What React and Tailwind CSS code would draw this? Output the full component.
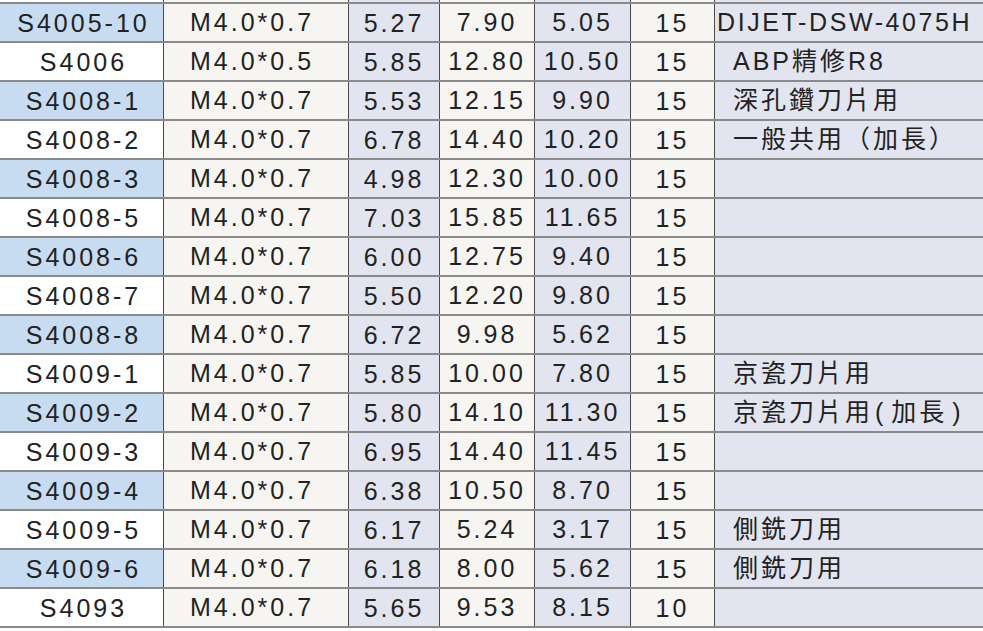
import React from "react";

const rows = [
  ["S4005-10", "M4.0*0.7", "5.27", "7.90", "5.05", "15", "DIJET-DSW-4075H"],
  ["S4006", "M4.0*0.5", "5.85", "12.80", "10.50", "15", "ABP精修R8"],
  ["S4008-1", "M4.0*0.7", "5.53", "12.15", "9.90", "15", "深孔鑽刀片用"],
  ["S4008-2", "M4.0*0.7", "6.78", "14.40", "10.20", "15", "一般共用（加長）"],
  ["S4008-3", "M4.0*0.7", "4.98", "12.30", "10.00", "15", ""],
  ["S4008-5", "M4.0*0.7", "7.03", "15.85", "11.65", "15", ""],
  ["S4008-6", "M4.0*0.7", "6.00", "12.75", "9.40", "15", ""],
  ["S4008-7", "M4.0*0.7", "5.50", "12.20", "9.80", "15", ""],
  ["S4008-8", "M4.0*0.7", "6.72", "9.98", "5.62", "15", ""],
  ["S4009-1", "M4.0*0.7", "5.85", "10.00", "7.80", "15", "京瓷刀片用"],
  ["S4009-2", "M4.0*0.7", "5.80", "14.10", "11.30", "15", "paren"],
  ["S4009-3", "M4.0*0.7", "6.95", "14.40", "11.45", "15", ""],
  ["S4009-4", "M4.0*0.7", "6.38", "10.50", "8.70", "15", ""],
  ["S4009-5", "M4.0*0.7", "6.17", "5.24", "3.17", "15", "側銑刀用"],
  ["S4009-6", "M4.0*0.7", "6.18", "8.00", "5.62", "15", "側銑刀用"],
  ["S4093", "M4.0*0.7", "5.65", "9.53", "8.15", "10", ""],
];

const grid = "grid grid-cols-[163px_185px_91px_95px_96px_84px_1fr]";
const cell = "flex items-center justify-center border-l border-[#4a4a4a]";

const Note = ({ text, first }) => {
  if (text === "paren") {
    return (
      <span>
        京瓷刀片用<span className="ml-[2px] mr-[5px]">(</span>加長<span className="ml-[5px]">)</span>
      </span>
    );
  }
  if (first) return <span className="-ml-[16px] tracking-[2.6px]">{text}</span>;
  return <span>{text}</span>;
};

export default function App() {
  return (
    <div
      className="w-[983px] h-[631px] bg-white text-[#222] overflow-hidden"
      style={{ fontFamily: '"Liberation Sans", Arial, "Noto Sans CJK TC", sans-serif' }}
    >
      {/* partial row above */}
      <div className={`${grid} h-[2px] border-b-2 border-[#8a8a8a] box-content`}>
        <div className="bg-white" />
        <div className="bg-[#f6f5f1] border-l border-[#4a4a4a]" />
        <div className="bg-[#e2e5ef] border-l border-[#4a4a4a]" />
        <div className="bg-[#f6f5f1] border-l border-[#4a4a4a]" />
        <div className="bg-[#e2e5ef] border-l border-[#4a4a4a]" />
        <div className="bg-[#f6f5f1] border-l border-[#4a4a4a]" />
        <div className="bg-[#e2e5ef] border-l border-[#4a4a4a]" />
      </div>

      {rows.map((r, i) => (
        <div
          key={r[0]}
          className={`${grid} h-[39px] border-b-2 border-[#8a8a8a] text-[25px] tracking-[3px] leading-none`}
        >
          <div className={`flex items-center justify-center pt-[1px] pl-[4px] ${i % 2 === 0 ? "bg-[#c7dcf1]" : "bg-white"}`}>
            {r[0]}
          </div>
          <div className={`${cell} bg-[#f6f5f1] pr-[8px]`}>{r[1]}</div>
          <div className={`${cell} bg-[#e2e5ef] pt-[2px]`}>{r[2]}</div>
          <div className={`${cell} bg-[#f6f5f1]`}>{r[3]}</div>
          <div className={`${cell} bg-[#e2e5ef]`}>{r[4]}</div>
          <div className={`${cell} bg-[#f6f5f1] pt-[2px]`}>{r[5]}</div>
          <div className="flex items-center border-l border-[#4a4a4a] bg-[#e2e5ef] pl-[18px]">
            <Note text={r[6]} first={i === 0} />
          </div>
        </div>
      ))}
    </div>
  );
}
